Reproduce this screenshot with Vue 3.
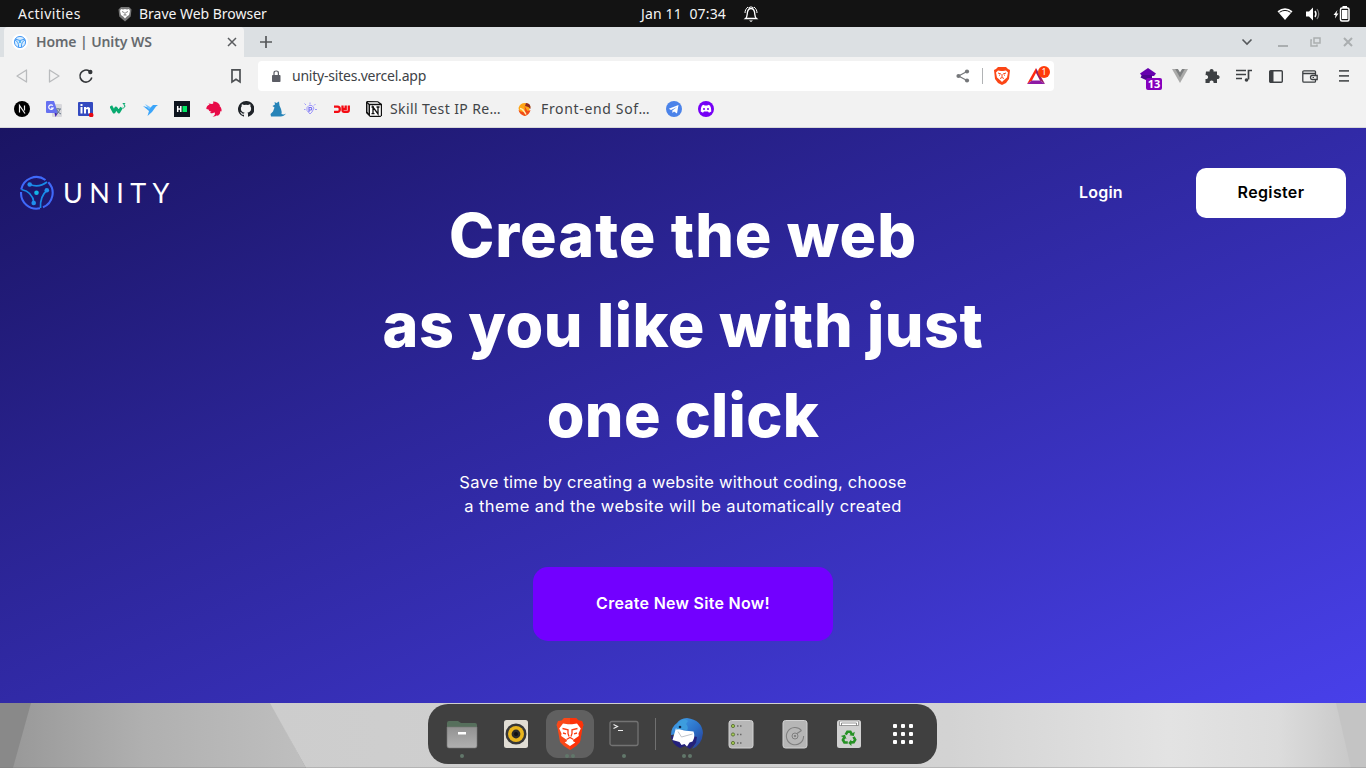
<script setup>
const dots = [0, 1, 2]
</script>

<template>
  <div class="screen">
    <header class="topbar">
      <span class="activities">Activities</span>
      <svg class="top-brave" width="14" height="16" viewBox="0 0 14 16"><path d="M3 1h8l2.5 2.5-.8 7L7 15.5 1.300 10.500.5 3.500z" fill="#777" /><path d="M3 3l2 .5 2-.5 2 .5L11 3l1 2-1 4-2.200 1.500L7 12.500 5.200 10.500 3 9 2 5z" fill="#fff" /><path d="M4 5.500l2 1M10 5.500l-2 1M7 6v3M5.500 9h3" stroke="#777" stroke-width=".9" /></svg>
      <span class="app-name">Brave Web Browser</span>
      <span class="date">Jan 11&nbsp; 07:34</span>
      <svg class="bell" width="16" height="18" viewBox="0 0 16 18" fill="none" stroke="#fff"><path d="M2.500 13.500c2-1.500 1.500-4 2-6.500C5 4.500 6 3.500 8 3.500S11 4.500 11.500 7c.5 2.500 0 5 2 6.500z" stroke-width="1.300" /><path d="M2 8c0-2.500 1-4.500 3-6M14 8c0-2.500-1-4.500-3-6M5.500 2.800Q8 .8 10.500 2.800" stroke-width="1" /><path d="M6 15.500h4L8 17z" fill="#fff" stroke="none" /></svg>
      <div class="status">
        <svg width="16" height="14" viewBox="0 0 16 14"><path d="M.5 4.200Q8-1.500 15.500 4.200L8 13z" fill="#fff" /><path d="M2.500 5.300Q8 1.500 13.500 5.300" fill="none" stroke="#131313" stroke-width="1" /></svg>
        <svg width="16" height="14" viewBox="0 0 16 14"><path d="M1 4.500h3L8 .5v13L4 9.500H1z" fill="#fff" /><path d="M10 4q2 3 0 6" fill="none" stroke="#fff" stroke-width="1.400" /><path d="M12 2q3.500 5 0 10" fill="none" stroke="#777" stroke-width="1.300" /></svg>
        <svg width="17" height="16" viewBox="0 0 17 16"><path d="M4.500 4L.5 9h2L2 12.500 5.500 7.500h-2z" fill="#fff" /><rect x="7.500" y="2" width="8.500" height="13" rx="1.500" fill="none" stroke="#fff" stroke-width="1.500" /><path d="M9.500 0h4.500v2H9.500zM9 4h5.500v9H9z" fill="#fff" /></svg>
      </div>
    </header>

    <div class="tabstrip">
      <div class="tab">
        <svg class="tab-icon" width="16" height="16" viewBox="0 0 16 16"><circle cx="8" cy="8" r="8" fill="#fff" /><circle cx="8" cy="8" r="5.600" fill="#d7edff" stroke="#4b9bf5" /><path d="M3 5q5 3 10 0M3 6q4 2 3.500 7M13 6q-4 2-3.500 7" fill="none" stroke="#429bf5" /><circle cx="8" cy="8" r="1" fill="#22a8f5" /></svg>
        <span class="tab-title">Home | Unity WS</span>
        <svg width="10" height="10" viewBox="0 0 10 10" stroke="#5a5c5f" stroke-width="1.500"><path d="M1 1l8 8M9 1L1 9" /></svg>
      </div>
      <svg class="plus" width="14" height="14" viewBox="0 0 14 14" stroke="#56585b" stroke-width="1.700"><path d="M7 1v12M1 7h12" /></svg>
      <div class="window-controls">
        <svg width="12" height="10" viewBox="0 0 12 10" fill="none" stroke="#55585b" stroke-width="1.600"><path d="M1.500 2.500L6 7l4.500-4.500" /></svg>
        <svg width="10" height="10" viewBox="0 0 10 10" fill="#aaaeb0"><path d="M0 8h10v2H0z" /></svg>
        <svg width="11" height="10" viewBox="0 0 11 10" fill="none" stroke="#aaaeb0" stroke-width="1.500"><path d="M4 1h6v5H4zM2 3H1v6h6V7.500" /></svg>
        <svg width="10" height="10" viewBox="0 0 10 10" stroke="#aaaeb0" stroke-width="2"><path d="M1 1l8 8M9 1L1 9" /></svg>
      </div>
    </div>

    <div class="toolbar">
      <svg width="16" height="16" viewBox="0 0 16 16" fill="none" stroke="#b9bbbd" stroke-width="1.300" stroke-linejoin="round"><path d="M12.500 2v12L3 8z" /></svg>
      <svg width="16" height="16" viewBox="0 0 16 16" fill="none" stroke="#b9bbbd" stroke-width="1.300" stroke-linejoin="round"><path d="M3.500 2v12L13 8z" /></svg>
      <svg width="16" height="16" viewBox="0 0 16 16" fill="none" stroke="#333639" stroke-width="1.600"><path d="M11.500 3.200A6 6 0 1 0 13.800 9.500" /><circle cx="12.300" cy="4" r="2.200" fill="#333639" stroke="none" /></svg>
      <svg class="save" width="16" height="16" viewBox="0 0 16 16" fill="none" stroke="#4d5053" stroke-width="1.700"><path d="M4 1.900h8v12L8 11.300l-4 2.600z" /></svg>
      <div class="address">
        <svg class="lock" width="10" height="12" viewBox="0 0 10 12"><rect x="1" y="5" width="8.500" height="7" rx=".8" fill="#5b5d65" /><path d="M3 5V3q0-2 2.200-2t2.200 2v2" fill="none" stroke="#5b5d65" stroke-width="1.200" /></svg>
        <span class="url">unity-sites.vercel.app</span>
        <svg class="share" width="14" height="14" viewBox="0 0 14 14" fill="#75777a"><path d="M2.500 7L11 2.500M2.500 7l8.500 4.500" stroke="#75777a" stroke-width="1.300" /><circle cx="2.500" cy="7" r="2.100" /><circle cx="11" cy="2.500" r="2.100" /><circle cx="11" cy="11.500" r="2.100" /></svg>
        <i class="address-rule"></i>
        <svg class="shield" width="16" height="18" viewBox="0 0 16 18"><path d="M4 0h8l2 2 2 1-1 9-3 4-4 2-4-2-3-4-1-9 2-1z" fill="#fb4616" /><path d="M4 3.500l3 .5h2l3-.5 2 2-1 5-3 2.500L8 15l-2-2-3-2.500-1-5z" fill="#fff" /><path d="M4 6l3 1M12 6L9 7M5 8.500l1-.7M11 8.500l-1-.7M8 7v3M6 11.500l2-1 2 1" fill="none" stroke="#fb4616" /></svg>
        <div class="bat">
          <svg width="18" height="16" viewBox="0 0 18 16"><path d="M9 0L0 16l5-3.500L9 5z" fill="#ff2a10" /><path d="M9 0l9 16-5-3.500L9 5z" fill="#9e1f63" /><path d="M0 16h18l-5-3.500H5z" fill="#8e1aa5" /></svg>
          <span class="count">1</span>
        </div>
      </div>
      <div class="extensions">
        <div class="ext-wallet"><svg width="16" height="16" viewBox="0 0 16 16"><path d="M8 0l8 5.500-2 2.500H2L0 5.500z" fill="#6600ae" /><path d="M2 7h10v4L8 13 .5 9.500z" fill="#4d0290" /></svg><span>13</span></div>
        <svg width="16" height="14" viewBox="0 0 16 14"><path d="M0 0h16L8 14z" fill="#aaaaa9" /><path d="M3.200 0H6l2 3.300L10 0h2.800L8 8.400z" fill="#7e8081" /><path d="M6 0l2 3.300L10 0z" fill="#f2f2f2" /></svg>
        <svg width="16" height="16" viewBox="0 0 16 16" fill="#3d4043"><path d="M2 3.500h3.700a2 2 0 1 1 3.800 0H13v3.700a2 2 0 1 1 0 3.800v4H9.500a2 2 0 1 0-3.800 0H1.500v-4a2 2 0 1 0 0-3.800z" /></svg>
        <svg width="16" height="14" viewBox="0 0 16 14" fill="none" stroke="#3d4043" stroke-width="1.700"><path d="M0 1.500h10M0 5.500h10M0 9.500h6M16 1.500h-3.500v9" /><circle cx="10.500" cy="11" r="1.800" fill="#3d4043" stroke="none" /></svg>
        <svg width="14" height="13" viewBox="0 0 14 13"><rect x=".7" y=".7" width="12.600" height="11.600" rx="1" fill="none" stroke="#3d4043" stroke-width="1.400" /><path d="M1 1h3.500v11H1z" fill="#3d4043" /></svg>
        <svg width="16" height="13" viewBox="0 0 16 13" fill="none" stroke="#3d4043" stroke-width="1.300"><path d="M13.500 3.500V1.800q0-1-1-1H2Q.8.800.8 2v9q0 1.200 1.200 1.200h10.500q1 0 1-1V10M1 3.500h12.500V5M15.200 5.500H10Q8.500 5.500 8.500 7.500t1.500 2h5.200z" /><path d="M10.500 7h1.500v1h-1.500z" fill="#3d4043" stroke="none" /></svg>
        <svg width="10" height="12" viewBox="0 0 10 12" fill="#55585a"><path d="M0 0h10v1.700H0zM0 5h10v1.700H0zM0 10h10v1.700H0z" /></svg>
      </div>
    </div>

    <nav class="bookmarks">
      <svg width="16" height="16" viewBox="0 0 16 16"><circle cx="8" cy="8" r="8" /><path d="M5.500 11.500v-7l5.500 8M10.500 4.500v5" fill="none" stroke="#eee" stroke-width="1.200" /></svg>
      <svg width="16" height="16" viewBox="0 0 16 16"><rect x="6" y="3" width="10" height="13" rx="1" fill="#d8d8dc" /><path d="M0 1q0-1 1-1h7l4 12H1q-1 0-1-1z" fill="#6671f1" /><path d="M8.500 12H12l-2.500 4z" fill="#4423ba" /><path d="M6.800 4.600A2.300 2.300 0 1 0 7.200 7H5" fill="none" stroke="#fff" stroke-width="1.200" /><path d="M10 8h5M12 7v1M14 8q-1 4-4 5M11 9q1 3 4 4" fill="none" stroke="#67798a" /></svg>
      <svg width="16" height="16" viewBox="0 0 16 16"><rect y="1" width="15" height="14" rx="1" fill="#334ac0" /><path d="M2.500 6h2v6.500h-2zM2.500 3h2v2h-2zM6 6h2v1q2-2 4 0v5.500h-2V8.500Q9 7.500 8 8.500v4H6z" fill="#fff" /><circle cx="13.200" cy="14" r="2.300" fill="#e50914" /></svg>
      <svg width="16" height="16" viewBox="0 0 16 16" fill="none" stroke="#09aa70" stroke-width="3"><path d="M.8 5l3.200 6L6 7l2.800 4L11.500 6.500" stroke-linejoin="round" /><path d="M12.700 2.500h2.200L13.700 4q2 .2 1 2t-2 .3" stroke-width="1" /></svg>
      <svg width="16" height="16" viewBox="0 0 16 16" fill="#3ba5fa"><path d="M1 5l7 2 3-3h5l-2 1.500-4 5.500-4.500 4 1.500-5-3-2.500z" /><path d="M3 3l6 3.500-2 2z" fill="#78c4ff" /></svg>
      <svg width="16" height="16" viewBox="0 0 16 16"><path d="M0 0h16v16H0z" fill="#0d141e" /><path d="M3.700 5v6M6.800 5v6M4 8h3" stroke="#fff" stroke-width="1.500" /><path d="M8.500 5H13v6H8.500z" fill="#00ea64" /></svg>
      <svg width="16" height="16" viewBox="0 0 16 16" fill="#e80b48"><path d="M7 .5q5 .2 7 4l-.5.500q2.500 2 2 5.500l-1-.5q0 3-2.800 5l-.5-.8Q9.500 15.500 6.500 15.800q3.500-2 2-4.500-2 1.800-4.500.5L5.500 10.500Q3 11 2.500 8.500L.3 8Q.3 4.500 3.500 3.800L2.500 2.500 6 3q2-.5 1-2.500z" /></svg>
      <svg width="16" height="16" viewBox="0 0 16 16"><path d="M8 0a8 8 0 0 0-2.500 15.600c.4.100.5-.2.500-.4v-1.500c-2.200.5-2.700-1-2.700-1-.4-.9-.9-1.200-.9-1.200-.7-.5.100-.5.100-.5.800.1 1.200.8 1.200.8.700 1.200 1.900.9 2.400.7 0-.5.200-.9.500-1.100-1.800-.2-3.700-.9-3.700-4 0-.9.300-1.600.9-2.100-.1-.2-.4-1 .1-2.100 0 0 .7-.2 2.200.8a7 7 0 0 1 3.900 0c1.500-1 2.200-.8 2.200-.8.500 1.100.2 1.900.1 2.100.5.500.8 1.200.8 2.100 0 3.100-1.900 3.800-3.700 4 .3.300.6.800.6 1.600v2.300c0 .2.100.5.500.4A8 8 0 0 0 8 0z" fill="#202429" /></svg>
      <svg width="16" height="16" viewBox="0 0 16 16" fill="#2784b8"><path d="M4.500 1l2 1L9 .5l.5 4 1.500 3.500q1 3 .5 5 2 1 4.500-.5-2 3-5.500 3H1L.5 13 3 10.500l1.500-4-2-1.500L5 3.500z" /></svg>
      <svg width="16" height="16" viewBox="0 0 16 16" fill="none" stroke="#9e98fb"><path d="M8 13L5 9.500V6.500l2-2h3l2 2.500-2 4zM8 3.500V1.500M12 4.500l1.500-1.500M4 4L2.500 2.500M2 8.500h1.500M13 8.500h2" /><path d="M7 11V6.500H9q1.500 1 0 2.500H7" stroke="#716af3" stroke-width="1.100" /></svg>
      <svg width="16" height="16" viewBox="0 0 16 16" fill="none" stroke="#f40b13" stroke-width="2.300"><path d="M0 5.700h3.500q2.300 0 2.300 2.600t-2.300 2.500H0M8.500 4.500v5q0 1.300 1.300 1.300h3.500q1.500 0 1.500-1.800V4.500M11.700 4.500V8H9" /></svg>
      <svg width="16" height="16" viewBox="0 0 16 16"><path d="M1 0l11 .2 4 2.800v11.500L14.500 16H4L0 12V1z" fill="#111" /><path d="M4 4.200h10.800v10.600H4zM1.500 1.200h10L13.500 2.800H3.500z" fill="#fff" /><path d="M1.200 2.600l1.600 1.500v8.500l-1.600-2z" fill="#aaa" /><path d="M7 12.700V6l5 7V6M5.500 6H8M10.500 6h3M5.500 12.700h3" fill="none" stroke="#111" stroke-width="1.300" /></svg>
      <span class="bookmark-one">Skill Test IP Re…</span>
      <svg width="16" height="16" viewBox="0 0 16 16"><path d="M1.500 7Q3 2 8 2q4 0 5.500 4l-3 7-2 2Q2 13 1.500 7z" fill="#ffa516" /><path d="M1.500 9q1 4.500 6 6 5-1 6-6l-3 1-3-5q1 5-1 6-2 .5-5-2z" fill="#f04c18" /><path d="M9 2q5 0 4.500 6Q12 5.500 8 5z" fill="#8d2b22" /><path d="M3 7.500q3 0 6 6" fill="none" stroke="#fff0b0" stroke-width="1.500" /></svg>
      <span class="bookmark-two">Front-end Sof…</span>
      <svg class="telegram" width="16" height="16" viewBox="0 0 16 16"><circle cx="8" cy="8" r="8" fill="#4b83e9" /><path d="M2.800 7.800L12.500 4l-1.500 8.500-3-2-1.500 1.500-.2-2.500L11 6 5 9z" fill="#fff" /></svg>
      <svg width="16" height="16" viewBox="0 0 16 16"><circle cx="8" cy="8" r="8" fill="#7600f6" /><path d="M4 4.500l2-.8.5.8h3l.5-.8 2 .8q1.500 2.500 1.300 6l-2.300 1.200-1-1.200H6l-1 1.200-2.300-1.200q0-4 1.300-6z" fill="#fff" /><circle cx="6" cy="8" r="1" fill="#7600f6" /><circle cx="10" cy="8" r="1" fill="#7600f6" /></svg>
    </nav>

    <main class="page">
      <div class="site-nav">
        <svg class="logo-mark" width="34" height="36" viewBox="0 0 34 36" fill="none">
          <path d="M1.200 14.500A15.500 15.500 0 0 1 25.500 5M28.300 7.200A15.500 15.500 0 0 1 23 32.300M20 33.300A15.500 15.500 0 0 1 1.100 17" stroke="#3f69fa" stroke-width="2.100" />
          <path d="M10 9.500q9 3.500 17-2.500M1.500 14.500q11 2 12.500 13.500M26.800 15.500q-7 6-6.300 17.500" stroke="#188be8" stroke-width="1.700" />
          <circle cx="9.700" cy="9.500" r="2.300" fill="#208fee" /><circle cx="26.800" cy="15.300" r="2.300" fill="#208fee" /><circle cx="13.700" cy="28" r="2.300" fill="#208fee" /><circle cx="16.500" cy="17.800" r="2.300" fill="#13b6e7" />
        </svg>
        <span class="logo-name">UNITY</span>
        <a class="login">Login</a>
        <button class="register">Register</button>
      </div>
      <section class="hero">
        <h1><span class="line-a">Create the web</span><span class="line-b">as you like with just</span><span class="line-c">one click</span></h1>
        <p><span class="copy-a">Save time by creating a website without coding, choose</span><span class="copy-b">a theme and the website will be automatically created</span></p>
        <button class="cta">Create New Site Now!</button>
      </section>
    </main>

    <footer class="desktop">
      <svg class="wallpaper" width="1366" height="65" viewBox="0 0 1366 65">
        <defs>
          <linearGradient id="mid"><stop stop-color="#999" /><stop offset=".45" stop-color="#b0b0b0" /><stop offset="1" stop-color="#bfbfbf" /></linearGradient>
          <linearGradient id="light"><stop stop-color="#cdcdcd" /><stop offset=".62" stop-color="#d3d3d3" /><stop offset=".82" stop-color="#e3e3e3" /><stop offset=".92" stop-color="#dcdcdc" /><stop offset="1" stop-color="#c5c5c5" /></linearGradient>
        </defs>
        <path d="M0 0h1366v65H0z" fill="#898989" /><path d="M31 0h240l35 65H13z" fill="url(#mid)" /><path d="M270 0h1096v65H306z" fill="url(#light)" /><path d="M1336 0h30v65h-15z" fill="#c4c4c4" />
        <path d="M0 64.500h1366" stroke="#777" stroke-opacity=".3" />
      </svg>
      <div class="dock">
        <div class="app"><svg width="32" height="32" viewBox="0 0 32 32"><defs><linearGradient id="folder" x2="0" y2="1"><stop stop-color="#929292" /><stop offset="1" stop-color="#b0b0b0" /></linearGradient></defs><path d="M1 5q0-2 2-2h9l3 2h14q2 0 2 2v7H1z" fill="#566f5c" /><path d="M1 9h30v19q0 2-2 2H3q-2 0-2-2z" fill="url(#folder)" stroke="#777" stroke-width=".6" /><path d="M12 14h8v2.500h-8z" fill="#fff" /></svg><span class="indicator"><i></i></span></div>
        <div class="app"><svg width="32" height="32" viewBox="0 0 32 32"><rect x="4" y="2" width="24" height="28" rx="2.500" fill="#e1ddd4" /><circle cx="16" cy="16" r="10.500" fill="#373737" /><circle cx="16" cy="16" r="8" fill="#e9b51d" /><circle cx="16" cy="16" r="4.400" fill="#2b2b2b" /><circle cx="16" cy="16" r="2" fill="#111" /></svg></div>
        <div class="app active"><svg width="32" height="34" viewBox="0 0 32 34"><path d="M10 1h12l2.500 2.500L28 4l1.500 4-1 3-2.500 14-4 4-6 4-6-4-4-4-2.500-14-1-3L4 4l3.500-.5z" fill="#fa4818" /><path d="M16 1h6l2.500 2.500L28 4l1.500 4-1 3-2.500 14-4 4-6 4z" fill="#ff2500" fill-opacity=".6" /><path d="M9 6.500l5 .8h4l5-.8 3.800 5-2.300 5 .3 2.500-5 3.500-1 1.500 2.500 1.500L16 29l-5.300-3.500 2.500-1.500-1-1.500-5-3.500.3-2.500-2.300-5z" fill="#fff" /><path d="M8.500 11.500l5.500 1.300v3.700l1 3M23.500 11.500L18 12.800v3.700l-1 3M9 16l3 .8M23 16l-3 .8M12.500 22.500l3.500-2 3.500 2" fill="none" stroke="#fa3d15" stroke-width="1.300" /></svg><span class="indicator"><i></i><i></i></span></div>
        <div class="app"><svg width="32" height="32" viewBox="0 0 32 32"><rect x="2" y="3.500" width="28" height="24" rx="2" fill="#454545" stroke="#737373" stroke-width="1.300" /><path d="M5.500 6.500l4 2-4 2M10 12.500h5" fill="none" stroke="#eee" stroke-width="1.200" /></svg><span class="indicator"><i></i></span></div>
        <span class="rule"></span>
        <div class="app"><svg width="34" height="34" viewBox="0 0 34 34"><defs><linearGradient id="bird" x2="1" y2="1"><stop stop-color="#46a6ee" /><stop offset=".55" stop-color="#2c72c9" /><stop offset="1" stop-color="#26338d" /></linearGradient></defs><path d="M1 18Q1 10 7 6q3-4.500 10-5 15 2 16 15-1 12-11 16l3-5-5-12z" fill="url(#bird)" /><path d="M1 18q0 9 9 13l5-2 5 3 6-6 1-6-4-1-8 5z" fill="#24217c" /><path d="M2.500 23L6 11l8 2.500 9.500 1q2 5-1 10l-3 1-2.500 4-2.500-2.500-3 1-2-3z" fill="#fff" /><path d="M8 14.500l3.500 5.500 11-3" fill="none" stroke="#b0b5bd" stroke-width=".8" /><path d="M6 12.500q1-9 9-10.500l3 2-2 3q3 3 1 6.500-5-2-11-1z" fill="#3d9dde" /><circle cx="10" cy="10" r="1.300" fill="#142448" /></svg><span class="indicator"><i></i><i></i></span></div>
        <div class="app"><svg width="32" height="32" viewBox="0 0 32 32"><rect x="4" y="2.500" width="24" height="27.500" rx="2.500" fill="#b7b7b7" stroke="#d2d2d2" /><g v-for="n in dots" :key="n" :transform="`translate(0 ${n * 8.5})`"><circle cx="8" cy="8" r="1.600" fill="#a4cd50" stroke="#61763e" /><path d="M12 8h1.500M15 8h1.500" stroke="#696969" stroke-width="1.400" /></g></svg></div>
        <div class="app"><svg width="32" height="32" viewBox="0 0 32 32"><rect x="4" y="2.500" width="24" height="27.500" rx="2.500" fill="#b6b6b6" stroke="#d2d2d2" /><path d="M22.500 12.500A8.600 8.600 0 1 0 24.600 18M22.500 12.500l-4.500 3" fill="none" stroke="#808080" stroke-width="1.100" /><circle cx="16" cy="18" r="3" fill="none" stroke="#808080" /><circle cx="16" cy="18" r="1.100" fill="#777" /></svg></div>
        <div class="app"><svg width="32" height="32" viewBox="0 0 32 32"><rect x="4" y="2" width="24" height="28" rx="2.500" fill="#d1d1d1" /><path d="M6.500 7.500V4q0-1 1-1h17q1 0 1 1v3.500z" fill="#fff" stroke="#666" stroke-width=".6" /><path d="M8.500 7.500V5h15v2.500" fill="none" stroke="#666" stroke-width=".7" /><g v-for="n in dots" :key="n" :transform="`rotate(${n * 120} 16 20)`"><path d="M12.700 16.700l1.700-2.900h3l1.500 2.500" fill="none" stroke="#269125" stroke-width="2.600" /><path d="M16.300 17.300l4.500.8 1-4.300z" fill="#269125" /></g></svg></div>
        <div class="app grid-app"><div class="app-dots"><i v-for="n in 9" :key="n"></i></div></div>
      </div>
    </footer>
  </div>
</template>

<style>
body { margin: 0; overflow: hidden; }
</style>

<style scoped>
* { box-sizing: border-box; }
.screen { width: 1366px; height: 768px; display: flex; flex-direction: column; overflow: hidden; font-family: "Noto Sans", "Open Sans", sans-serif; }
svg { display: block; flex-shrink: 0; }
.topbar { height: 27px; display: flex; align-items: center; background: #131313; color: #f3f3f3; font-size: 14px; white-space: nowrap; padding-left: 18px; }
.activities { width: 100px; letter-spacing: .45px; }
.app-name { width: 509px; padding-left: 7px; letter-spacing: -.02px; flex-shrink: 0; }
.date { width: 102px; letter-spacing: .15px; }
.status { margin-left: 518px; display: flex; align-items: center; gap: 12px; }
.tabstrip { height: 30px; display: flex; align-items: center; background: #dce0e3; padding-left: 4px; }
.tab { width: 240px; height: 30px; display: flex; align-items: center; padding: 0 7px 0 8px; background: #f2f2f2; border-radius: 4px 4px 0 0; color: #666a6e; }
.tab-title { flex: 1; margin-left: 8px; padding-bottom: 2px; font-size: 14px; font-weight: 600; letter-spacing: -.1px; }
.plus { margin-left: 15px; }
.window-controls { display: flex; align-items: center; gap: 22px; margin-left: auto; padding-right: 13px; }
.window-controls svg:first-child { margin-right: 3px; }
.toolbar { height: 38px; display: flex; align-items: center; gap: 16px; background: #f2f2f2; padding-left: 14px; }
.save { margin-left: 118px; }
.address { width: 796px; height: 30px; margin-left: -2px; border-radius: 4px; display: flex; align-items: center; background: #fff; padding-left: 13px; }
.url { margin-left: 11px; padding-bottom: 2px; width: 664px; color: #404347; font-size: 14px; letter-spacing: -.22px; }
.share { width: 14px; }
.address-rule { width: 1px; height: 16px; background: #b1b3b5; margin: 0 11px 0 12px; }
.bat { position: relative; margin-left: 17px; }
.count { position: absolute; left: 11px; top: -2px; width: 12px; height: 12px; border-radius: 50%; background: #ff3c0a; color: #fff; font-size: 9px; line-height: 12px; text-align: center; }
.extensions { display: flex; align-items: center; gap: 16px; margin-left: 70px; }
.extensions > svg:nth-child(5) { margin-left: 1px; }
.extensions > svg:nth-child(6) { margin-left: 3px; }
.extensions > svg:nth-child(7) { margin-left: 5px; }
.ext-wallet { position: relative; }
.ext-wallet span { position: absolute; left: 6px; top: 10px; width: 16px; height: 12px; border-radius: 2px; background: #8500bd; color: #fff; font: 700 11px/12px "Noto Sans", sans-serif; text-align: center; }
.bookmarks { height: 33px; display: flex; align-items: center; gap: 16px; padding: 0 0 4px 14px; background: #f2f2f2; border-bottom: 1px solid #d7d8d9; color: #414447; font-size: 14px; white-space: nowrap; }
.bookmarks span { padding-bottom: 1px; }
.bookmark-one { width: 111px; margin-left: -8px; letter-spacing: .4px; }
.bookmark-two { width: 109px; margin-left: -8px; letter-spacing: .66px; }
.page { height: 575px; background: linear-gradient(157deg, #1a1463 0%, #4840ea 100%); color: #fff; font-family: Inter, sans-serif; }
.site-nav { height: 90px; display: flex; align-items: center; padding: 40px 20px 0; }
.logo-name { margin-left: 9px; padding-bottom: 2px; font: 400 27px/1 Lato, sans-serif; letter-spacing: 6.400px; }
.login { margin-left: auto; margin-right: 73px; padding-bottom: 2px; width: 44px; font-size: 16px; font-weight: 600; letter-spacing: .2px; white-space: nowrap; }
.register, .cta { border: 0; font-family: Inter, sans-serif; font-size: 16px; font-weight: 600; padding: 0 0 2px; }
.register { width: 150px; height: 50px; border-radius: 10px; color: #000; background: #fff; letter-spacing: .35px; }
.hero { display: flex; flex-direction: column; align-items: center; margin-top: -28px; }
h1 { margin: 0; font-size: 61px; line-height: 90px; font-weight: 800; display: flex; flex-direction: column; align-items: center; white-space: nowrap; }
.line-a { letter-spacing: .95px; }
.line-b { letter-spacing: .52px; }
.line-c { letter-spacing: .28px; }
p { display: flex; flex-direction: column; align-items: center; margin: 10px 0 49px; font-size: 16.5px; line-height: 24px; white-space: nowrap; }
.copy-a { letter-spacing: .24px; }
.copy-b { letter-spacing: .37px; }
.cta { width: 300px; height: 74px; color: #fff; background: #7200ff; border-radius: 15px; letter-spacing: .28px; }
.desktop { height: 65px; position: relative; display: flex; justify-content: center; padding-top: 1px; }
.wallpaper { position: absolute; inset: 0; }
.dock { width: 509px; height: 60px; margin-right: 1px; display: flex; align-items: center; gap: 6px; padding-left: 10px; border-radius: 20px; background: #404040; z-index: 1; }
.app { position: relative; width: 48px; height: 48px; display: flex; align-items: center; justify-content: center; border-radius: 12px; }
.active { background: #606060; }
.indicator { position: absolute; bottom: 0; left: 0; right: 0; display: flex; justify-content: center; gap: 2px; }
.indicator i { width: 4px; height: 4px; border-radius: 50%; background: #61776a; }
.rule { width: 1px; height: 32px; background: #707070; margin: 0 1px; }
.app-dots { display: grid; grid-template-columns: repeat(3, 4px); gap: 4px; }
.app-dots i { width: 4px; height: 4px; border-radius: 1px; background: #fff; }
</style>
